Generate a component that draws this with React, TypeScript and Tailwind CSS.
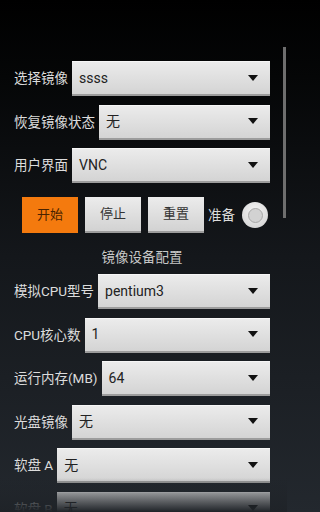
import React from "react";

type Row = { label: string; value: string };

const topRows: Row[] = [
  { label: "选择镜像", value: "ssss" },
  { label: "恢复镜像状态", value: "无" },
  { label: "用户界面", value: "VNC" },
];

const deviceRows: Row[] = [
  { label: "模拟CPU型号", value: "pentium3" },
  { label: "CPU核心数", value: "1" },
  { label: "运行内存(MB)", value: "64" },
  { label: "光盘镜像", value: "无" },
  { label: "软盘 A", value: "无" },
  { label: "软盘 B", value: "无" },
];

const Spinner = ({ value }: { value: string }) => (
  <div className="flex-1 h-[35px] flex items-center justify-between pl-[7px] pr-[12px] bg-gradient-to-b from-[#ececec] to-[#d4d4d4] border-b-2 border-[#9c9c9c] shadow-[inset_0_1px_0_#f6f6f6]">
    <span className="text-[14px] text-[#222] leading-none">{value}</span>
    <svg width="10" height="6" viewBox="0 0 10 6">
      <path d="M0 0H10L5 6Z" fill="#111" />
    </svg>
  </div>
);

const SpinnerRow = ({ row }: { row: Row }) => (
  <div className="flex items-center h-[35px]">
    <span className="text-[13.5px] text-[#dcdcdc] whitespace-nowrap">{row.label}</span>
    <div className="ml-1 flex-1 flex">
      <Spinner value={row.value} />
    </div>
  </div>
);

const Btn = ({ text, primary }: { text: string; primary?: boolean }) => (
  <button
    className={
      primary
        ? "w-[56px] h-[36px] bg-[#f47a0e] text-[#4a2300] text-[13px]"
        : "w-[56px] h-[36px] bg-gradient-to-b from-[#ececec] to-[#d2d2d2] border-b-2 border-[#9c9c9c] text-[#333] text-[13px]"
    }
  >
    {text}
  </button>
);

export default function App() {
  return (
    <div className="w-full h-[512px] overflow-hidden bg-[linear-gradient(to_bottom,#000_0%,#050607_15%,#14171b_50%,#23282e_100%)] font-['Roboto','Noto_Sans_CJK_SC',sans-serif]">
      <div className="relative w-[287px] h-[512px] overflow-hidden">
        <div className="pt-[61px] pl-[14px] pr-[17px]">
          <div className="flex flex-col gap-[8.5px]">
            {topRows.map((r) => (
              <SpinnerRow key={r.label} row={r} />
            ))}
          </div>

          <div className="mt-[14px] flex items-center pl-[8px]">
            <div className="flex gap-[7px]">
              <Btn text="开始" primary />
              <Btn text="停止" />
              <Btn text="重置" />
            </div>
            <span className="ml-[4px] text-[13.5px] text-[#dcdcdc]">准备</span>
            <div className="ml-[7px] w-[26px] h-[26px] rounded-full bg-[radial-gradient(circle_at_50%_35%,#f4f4f4,#cfcfcf)] flex items-center justify-center">
              <div className="w-[15px] h-[15px] rounded-full border border-[#a8a8a8] bg-[#d2d2d2]" />
            </div>
          </div>

          <div className="pt-[15px] pb-[8px] h-[41px] text-center text-[13.5px] leading-[18px] text-[#c8c8c8]">
            镜像设备配置
          </div>

          <div className="flex flex-col gap-[8.5px]">
            {deviceRows.map((r) => (
              <SpinnerRow key={r.label} row={r} />
            ))}
          </div>
        </div>

        <div className="absolute left-0 right-0 bottom-0 h-[34px] bg-gradient-to-b from-transparent to-[#1f2328]" />
        <div className="absolute right-[1px] top-[47px] w-[3px] h-[171px] bg-[#6e6e6e]" />
      </div>
    </div>
  );
}
